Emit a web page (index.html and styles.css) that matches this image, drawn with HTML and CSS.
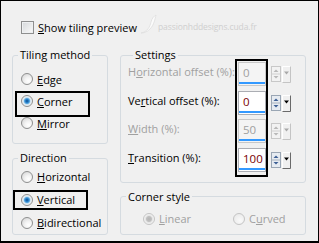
FILE: index.html
```html
<!DOCTYPE html>
<html>
<head>
<meta charset="utf-8">
<link rel="stylesheet" href="styles.css">
</head>
<body>
<div class="dialog">
  <div class="top">
    <div class="check"><span class="box"></span><span><u>S</u>how tiling preview</span></div>
    <div class="mark">
      <svg class="swoosh" width="18" height="22" viewBox="0 0 18 22"><path d="M2 20 C8 19 11 14 12 9 C13 5 15 3 17 2 C16 6 15 12 11 16 C8 19 5 20 2 20Z" fill="#fbfbfb" stroke="#dedede" stroke-width="0.8"/></svg>
      <span class="marktext">passionhddesigns.cuda.fr</span>
    </div>
  </div>
  <div class="cols">
    <div class="col left">
      <fieldset class="grp tiling">
        <legend>Tiling method</legend>
        <div class="radio"><span class="dot"></span><span><u>E</u>dge</span></div>
        <div class="radio on"><span class="dot"></span><span><u>C</u>orner</span></div>
        <div class="radio"><span class="dot"></span><span><u>M</u>irror</span></div>
      </fieldset>
      <fieldset class="grp direction">
        <legend>Direction</legend>
        <div class="radio"><span class="dot"></span><span><u>H</u>orizontal</span></div>
        <div class="radio on"><span class="dot"></span><span><u>V</u>ertical</span></div>
        <div class="radio"><span class="dot"></span><span><u>B</u>idirectional</span></div>
      </fieldset>
    </div>
    <div class="col right">
      <fieldset class="grp settings">
        <legend>Settings</legend>
        <div class="row dis">
          <span class="lbl">H<u>o</u>rizontal offset (%):</span>
          <span class="edit">0</span>
          <svg class="spin" width="10" height="16" viewBox="0 0 10 16"><rect x="0.5" y="0.5" width="9" height="15" fill="#f2f2f2" stroke="#c8c8c8"/><line x1="0.5" y1="8" x2="9.5" y2="8" stroke="#d0d0d0"/><path d="M2.5 6 L5 3.5 L7.5 6Z" fill="#b8b8b8"/><path d="M2.5 10 L5 12.5 L7.5 10Z" fill="#b8b8b8"/></svg>
          <svg class="drop" width="9" height="17" viewBox="0 0 9 17"><rect width="9" height="17" fill="#f0f0f0"/><path d="M0.5 16.5V0.5H8.5" stroke="#fff" fill="none"/><path d="M0.5 16.5H8.5V0.5" stroke="#c4c4c4" fill="none"/><path d="M2 5.5h5l-2.5 3z" fill="#a8a8a8"/></svg>
        </div>
        <div class="row">
          <span class="lbl">Ve<u>r</u>tical offset (%):</span>
          <span class="edit">0</span>
          <svg class="spin" width="10" height="16" viewBox="0 0 10 16"><rect x="0.5" y="0.5" width="9" height="15" fill="#e6ebf1" stroke="#9aa6b4"/><line x1="0.5" y1="8" x2="9.5" y2="8" stroke="#a8b2be"/><path d="M2.5 6 L5 3.5 L7.5 6Z" fill="#3d5f94"/><path d="M2.5 10 L5 12.5 L7.5 10Z" fill="#3d5f94"/></svg>
          <svg class="drop" width="9" height="17" viewBox="0 0 9 17"><rect width="9" height="17" fill="#f0f0f0"/><path d="M0.5 16.5V0.5H8.5" stroke="#fff" fill="none"/><path d="M0.5 16.5H8.5V0.5" stroke="#6a6a6a" fill="none"/><path d="M2 5.5h5l-2.5 3z" fill="#000"/></svg>
        </div>
        <div class="row dis">
          <span class="lbl"><u>W</u>idth (%):</span>
          <span class="edit">50</span>
          <svg class="spin" width="10" height="16" viewBox="0 0 10 16"><rect x="0.5" y="0.5" width="9" height="15" fill="#f2f2f2" stroke="#c8c8c8"/><line x1="0.5" y1="8" x2="9.5" y2="8" stroke="#d0d0d0"/><path d="M2.5 6 L5 3.5 L7.5 6Z" fill="#b8b8b8"/><path d="M2.5 10 L5 12.5 L7.5 10Z" fill="#b8b8b8"/></svg>
          <svg class="drop" width="9" height="17" viewBox="0 0 9 17"><rect width="9" height="17" fill="#f0f0f0"/><path d="M0.5 16.5V0.5H8.5" stroke="#fff" fill="none"/><path d="M0.5 16.5H8.5V0.5" stroke="#c4c4c4" fill="none"/><path d="M2 5.5h5l-2.5 3z" fill="#a8a8a8"/></svg>
        </div>
        <div class="row">
          <span class="lbl"><u>T</u>ransition (%):</span>
          <span class="edit">100</span>
          <svg class="spin" width="10" height="16" viewBox="0 0 10 16"><rect x="0.5" y="0.5" width="9" height="15" fill="#e6ebf1" stroke="#9aa6b4"/><line x1="0.5" y1="8" x2="9.5" y2="8" stroke="#a8b2be"/><path d="M2.5 6 L5 3.5 L7.5 6Z" fill="#3d5f94"/><path d="M2.5 10 L5 12.5 L7.5 10Z" fill="#3d5f94"/></svg>
          <svg class="drop" width="9" height="17" viewBox="0 0 9 17"><rect width="9" height="17" fill="#f0f0f0"/><path d="M0.5 16.5V0.5H8.5" stroke="#fff" fill="none"/><path d="M0.5 16.5H8.5V0.5" stroke="#6a6a6a" fill="none"/><path d="M2 5.5h5l-2.5 3z" fill="#000"/></svg>
        </div>
      </fieldset>
      <fieldset class="grp corner">
        <legend>Corner style</legend>
        <div class="cs">
          <div class="radio dis on linear"><span class="dot"></span><span><u>L</u>inear</span></div>
          <div class="radio dis"><span class="dot"></span><span>C<u>u</u>rved</span></div>
        </div>
      </fieldset>
    </div>
  </div>
  <div class="hl hl-corner"></div>
  <div class="hl hl-vertical"></div>
  <div class="hl hl-edits"></div>
</div>
</body>
</html>
```
FILE: styles.css
```css
* { box-sizing: border-box; }
html, body { margin: 0; padding: 0; background: #f0f0f0; }
body { font-family: "Open Sans", "Noto Sans", sans-serif; font-size: 11px; color: #000; }
u { text-decoration: underline; text-underline-offset: 1px; }

.dialog {
  position: relative;
  width: 319px;
  height: 243px;
  border: 1px solid #000;
  border-bottom-width: 2px;
  background: #f0f0f0;
  padding: 0 12px 0 11px;
  overflow: hidden;
}

.top { display: flex; align-items: center; height: 17px; margin-top: 18px; padding-left: 9px; }
.check { display: flex; align-items: center; gap: 4px; white-space: nowrap; }
.box {
  width: 13px; height: 13px;
  border: 1px solid #8e8f8f;
  background: linear-gradient(135deg, #d4d7da, #fbfbfb);
  box-shadow: inset 0 0 0 1px #eef0f2;
}
.mark { display: flex; align-items: center; margin-left: 2px; margin-top: -8px; }
.marktext { color: #cfcfcf; font-size: 8.5px; margin-left: 1px; margin-top: 6px; white-space: nowrap; letter-spacing: -0.1px; }

.cols { display: flex; gap: 12px; margin-top: 12px; }
.col { display: flex; flex-direction: column; }
.left { width: 96px; }
.right { width: 186px; }

.grp {
  margin: 0;
  padding: 0;
  min-width: 0;
  border: 1px solid #d5dbe0;
  border-radius: 3px;
}
.grp legend { padding: 0 2px; margin-left: 5px; line-height: 14px; }

.radio { display: flex; align-items: center; gap: 4px; height: 22px; padding-left: 8px; white-space: nowrap; }
.dot {
  width: 12px; height: 12px; border-radius: 50%;
  border: 1px solid #8e8f8f;
  background: radial-gradient(circle at 65% 70%, #ffffff 0, #f4f4f4 35%, #d0d0d0 100%);
  flex: none;
}
.radio.on .dot {
  background: radial-gradient(circle at 50% 50%, #0a4e8c 0, #2a7fc8 1.6px, #58a8e0 2.6px, #d4e6f2 3.6px, #f2f2f2 5px);
}
.radio.dis { color: #a0a0a0; }
.radio.dis .dot { border-color: #c4c4c4; background: radial-gradient(circle at 60% 65%, #fafafa, #e6e6e6); }
.radio.dis.on .dot { background: radial-gradient(circle, #b4b4b4 0, #c0c0c0 2.5px, #e4e4e4 3.5px, #f4f4f4 5px); }

.tiling { padding: 6px 0 9px; }
.direction { margin-top: 7px; padding: 0; }
.direction .radio { height: 23px; }

.settings { padding: 0 14px 10px 7px; }
.row { display: flex; align-items: flex-start; height: 24px; margin-bottom: 4.67px; }
.row:last-child { margin-bottom: 0; }
.lbl { flex: 1; white-space: nowrap; line-height: 20px; }
.row.dis .lbl { color: #a0a0a0; }
.edit {
  width: 28px; height: 24px;
  border: 1px solid #abadb3;
  padding: 2px 0 0 4px;
  line-height: 16px;
  font-size: 11.5px;
  color: #7a0000;
  background: linear-gradient(to top, transparent 1px, #3399ff 1px, #3399ff 3px, transparent 3px), #fff;
  margin-right: 5px;
}
.row.dis .edit { color: #a0a0a0; border-color: #c8c8c8; background: linear-gradient(to top, transparent 1px, #3399ff 1px, #3399ff 3px, transparent 3px), #f4f4f4; }
.spin { margin-top: 4px; margin-right: 1px; flex: none; }
.drop { margin-top: 4px; flex: none; }

.corner { margin-top: 7px; padding: 4px 0 4px; }
.cs { display: flex; padding-left: 14px; }
.cs .radio { padding-left: 8px; }
.cs .linear { width: 90px; }

.hl { position: absolute; border: 2px solid #000; }
.hl-corner { left: 14px; top: 90px; width: 75px; height: 26px; }
.hl-vertical { left: 12px; top: 189px; width: 75px; height: 20px; }
.hl-edits { left: 234px; top: 58px; width: 33px; height: 118px; }
```
